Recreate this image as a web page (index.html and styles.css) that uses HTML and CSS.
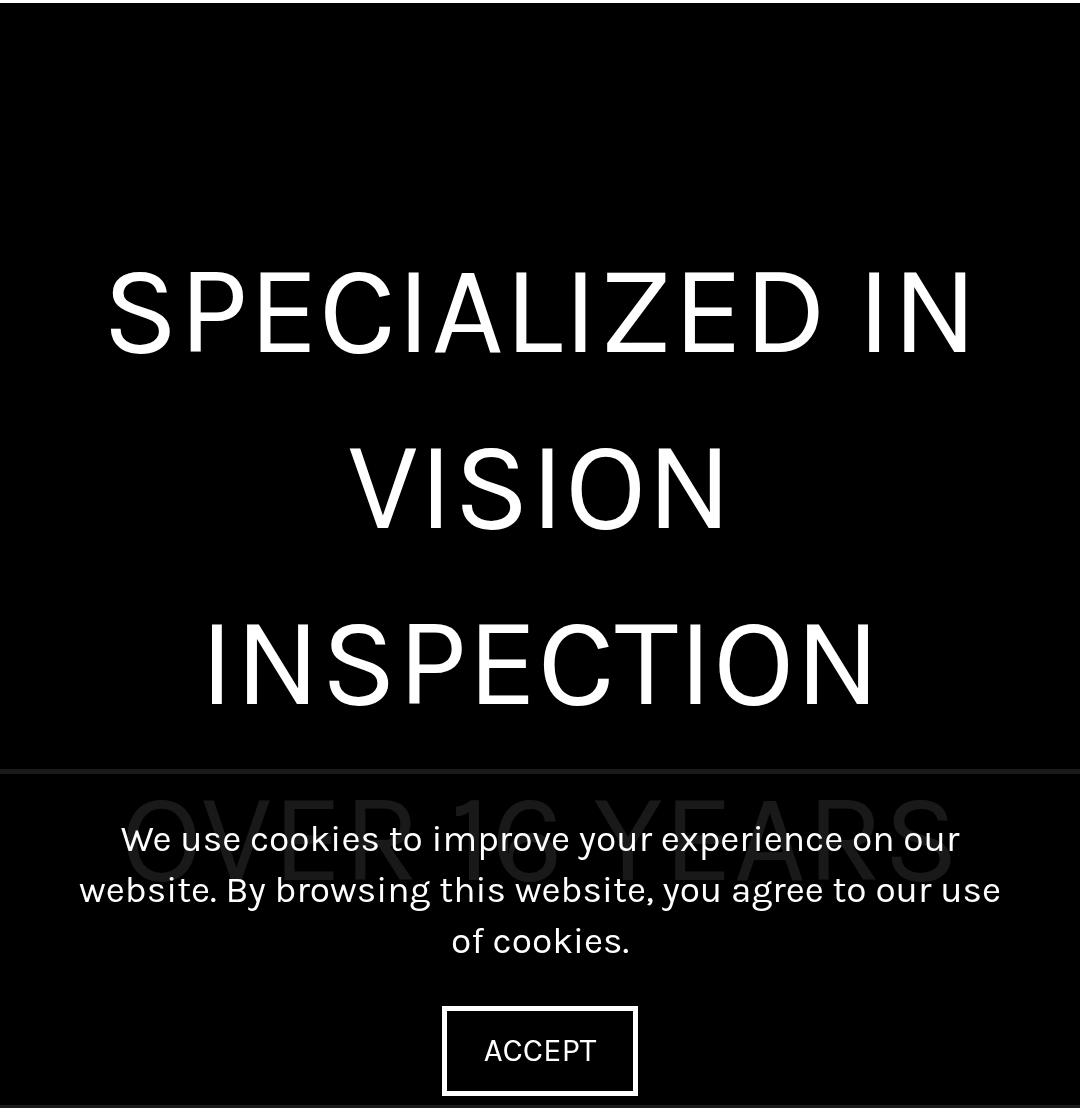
FILE: index.html
```html
<!DOCTYPE html>
<html lang="en">
<head>
<meta charset="utf-8">
<meta name="viewport" content="width=device-width, initial-scale=1">
<title>Specialized in vision inspection</title>
<link rel="stylesheet" href="styles.css">
</head>
<body>
<main class="hero">
  <h1 class="hero-title">Specialized in<br>vision<br>inspection<br>over 16 years</h1>
</main>
<section class="cookie-bar" aria-label="Cookie notice">
  <p class="cookie-text">We use cookies to improve your experience on our website. By browsing this website, you agree to our use of cookies.</p>
  <button class="cookie-accept" type="button">Accept</button>
</section>
</body>
</html>
```
FILE: styles.css
```css
* {
  box-sizing: border-box;
}

body {
  margin: 0;
  background: #000;
  color: #fff;
  font-family: Karla, Roboto, sans-serif;
}

.hero {
  min-height: 100vh;
  padding: 219px 48px 0;
  border-top: 3px solid #fff;
}

.hero-title {
  margin: 0;
  font-size: 126px;
  font-weight: 400;
  line-height: 176px;
  text-align: center;
  text-transform: uppercase;
}

.cookie-bar {
  position: fixed;
  right: 0;
  bottom: 0;
  left: 0;
  display: flex;
  flex-direction: column;
  align-items: center;
  gap: 40px;
  padding: 39px 72px 9px;
  border-top: 5px solid #1a1a1a;
  border-bottom: 3px solid #1a1a1a;
  background: rgba(0, 0, 0, 0.9);
}

.cookie-text {
  margin: 0;
  font-size: 37px;
  line-height: 51px;
  text-align: center;
}

.cookie-accept {
  padding: 19px 37px 21px;
  border: 5px solid #fff;
  background: #000;
  color: #fff;
  font-family: inherit;
  font-size: 33px;
  line-height: 40px;
  text-transform: uppercase;
}
```
